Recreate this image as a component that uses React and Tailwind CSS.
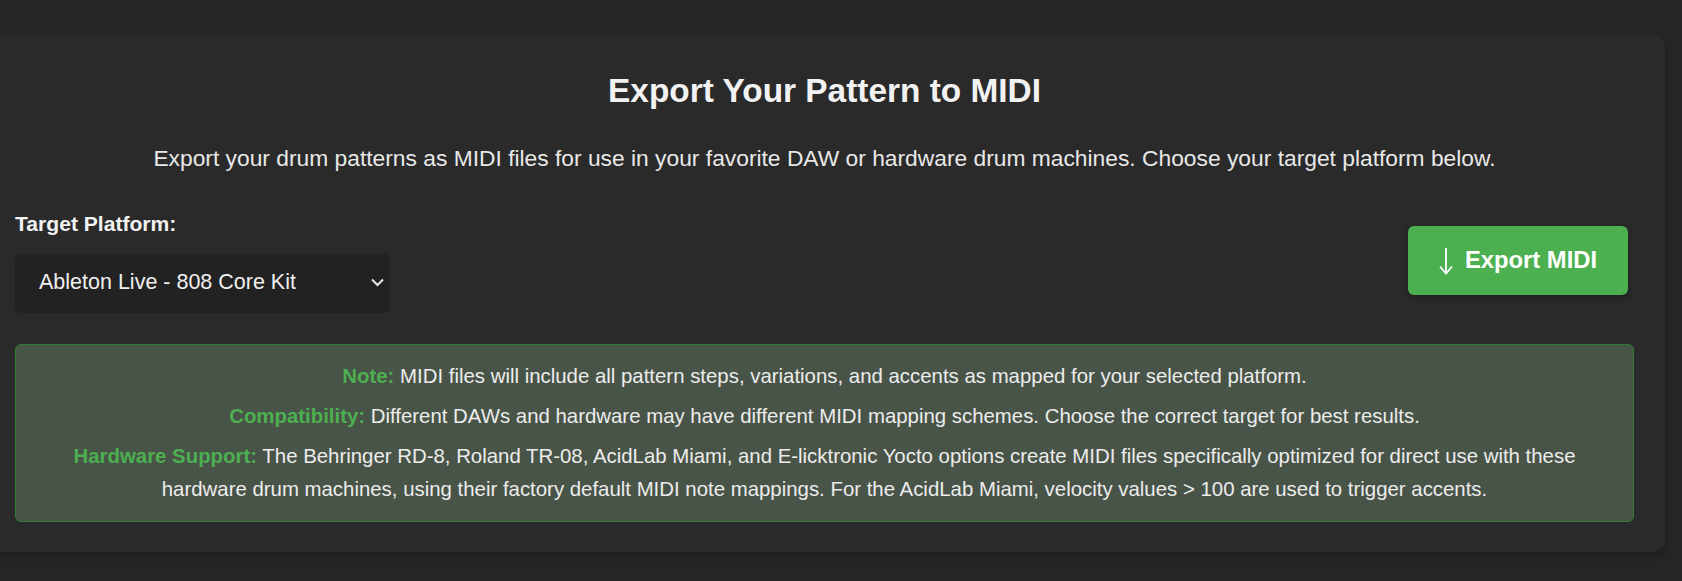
export default function App() {
  return (
    <div
      className="w-[1682px] h-[581px] overflow-hidden bg-[#262626] pt-[35px]"
      style={{ fontFamily: '"Liberation Sans", Arial, sans-serif' }}
    >
      <div className="ml-[-16px] w-[1681px] rounded-[12px] bg-[#2a2a2a] px-[31px] pt-[37px] pb-[30px] shadow-[0_4px_12px_rgba(0,0,0,0.25)]">
        <h2 className="text-center text-[33.4px] leading-[38.6px] font-bold text-[#f2f2f2]">
          Export Your Pattern to MIDI
        </h2>
        <p className="mt-[35px] text-center text-[22.8px] leading-[25.8px] text-[#e8e8e8]">
          Export your drum patterns as MIDI files for use in your favorite DAW or hardware drum machines. Choose your target platform below.
        </p>

        <div className="mt-[40px] flex items-center justify-between">
          <div className="flex flex-col">
            <label className="text-[21.1px] leading-[25.8px] font-bold text-[#f2f2f2]">
              Target Platform:
            </label>
            <div className="mt-[16.5px] flex h-[59px] w-[375px] items-center justify-between rounded-[6px] bg-[#222222] pl-[24px] pr-[6px]">
              <span className="text-[21.5px] leading-[25.8px] text-[#f0f0f0]">
                Ableton Live - 808 Core Kit
              </span>
              <svg width="13" height="9" viewBox="0 0 13 9" className="mb-[1px]">
                <path d="M1 1.5 L6.5 7 L12 1.5" fill="none" stroke="#e8e8e8" strokeWidth="2" />
              </svg>
            </div>
          </div>

          <button className="mr-[6px] mb-[4px] flex h-[69px] w-[220px] items-center justify-center gap-[12px] rounded-[6px] bg-[#4caf50] shadow-[0_2px_6px_rgba(0,0,0,0.3)]">
            <svg width="14" height="28" viewBox="0 0 14 28" className="mt-[2px]">
              <path d="M7 1 L7 26" stroke="#ffffff" strokeWidth="1.8" fill="none" />
              <path d="M1 19.5 L7 26.5 L13 19.5" stroke="#ffffff" strokeWidth="1.8" fill="none" />
            </svg>
            <span className="text-[23.8px] leading-[25.8px] font-bold text-white">Export MIDI</span>
          </button>
        </div>

        <div className="mt-[31px] flex flex-col gap-[6.7px] rounded-[6px] border border-[#2e7d32] bg-[#495448] px-[20px] py-[15px] text-center text-[20.4px] leading-[33.3px] text-[#ececec]">
          <p>
            <span className="font-bold text-[#4caf50]">Note:</span> MIDI files will include all pattern steps, variations, and accents as mapped for your selected platform.
          </p>
          <p>
            <span className="font-bold text-[#4caf50]">Compatibility:</span> Different DAWs and hardware may have different MIDI mapping schemes. Choose the correct target for best results.
          </p>
          <p>
            <span className="font-bold text-[#4caf50]">Hardware Support:</span> The Behringer RD-8, Roland TR-08, AcidLab Miami, and E-licktronic Yocto options create MIDI files specifically optimized for direct use with these hardware drum machines, using their factory default MIDI note mappings. For the AcidLab Miami, velocity values &gt; 100 are used to trigger accents.
          </p>
        </div>
      </div>
    </div>
  );
}
